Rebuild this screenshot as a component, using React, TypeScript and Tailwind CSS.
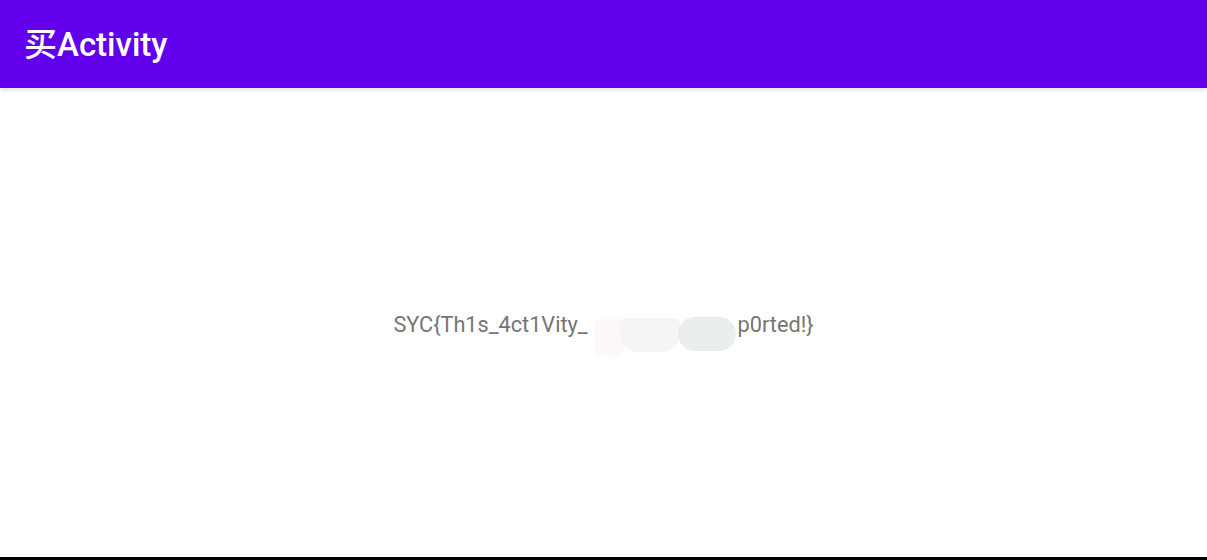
export default function App() {
  return (
    <div className="h-[560px] w-[1207px] flex flex-col bg-white overflow-hidden">
      {/* Toolbar */}
      <header className="h-[88px] shrink-0 bg-[#6200ee] flex items-center px-6 shadow-[0_2px_4px_rgba(0,0,0,0.12)]">
        <h1 className="text-[33px] leading-none font-medium text-white font-['Roboto','Noto_Sans_CJK_SC',sans-serif]">
          买Activity
        </h1>
      </header>

      {/* Content */}
      <main className="flex-1 flex items-center justify-center pt-[5px]">
        <div className="flex items-start text-[21.7px] leading-[28px] text-[#757575] font-['Roboto',sans-serif]">
          <span>SYC{'{'}Th1s_4ct1Vity_</span>
          <span className="relative w-[150px] h-[28px]">
            <span className="absolute left-[5px] top-[7px] w-[32px] h-[38px] bg-[#fdf8fc] rounded-[10px]" />
            <span className="absolute left-[32px] top-[7px] w-[60px] h-[34px] bg-[#f5f5f5] rounded-b-[18px] rounded-t-[6px]" />
            <span className="absolute left-[90px] top-[6px] w-[58px] h-[34px] bg-[#eaefeb] rounded-full" />
          </span>
          <span>p0rted!{'}'}</span>
        </div>
      </main>

      {/* Bottom edge */}
      <div className="h-[3px] shrink-0 bg-black" />
    </div>
  );
}
